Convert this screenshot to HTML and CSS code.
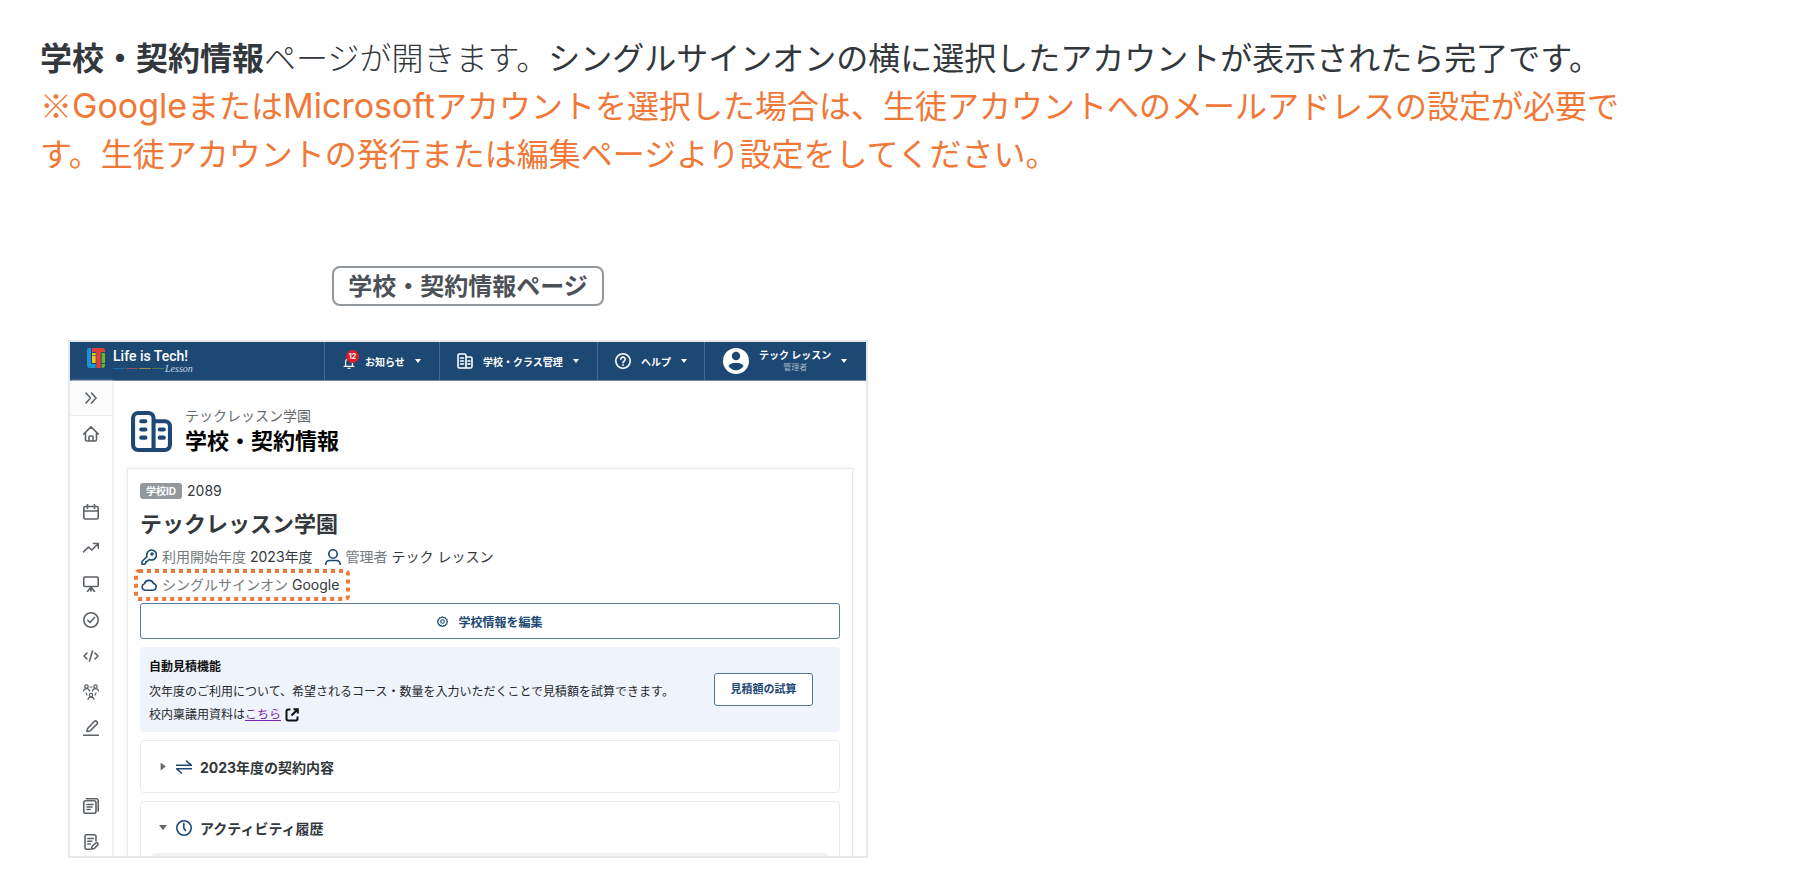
FILE: index.html
```html
<!DOCTYPE html>
<html lang="ja">
<head>
  <meta charset="UTF-8" />
  <meta name="viewport" content="width=device-width, initial-scale=1.0" />
  <title>学校・契約情報</title>
  <link rel="stylesheet" href="styles.css">
</head>
<body>
  <p class="guide"><strong>学校・契約情報</strong><span class="guide-light">ページが開きます。</span>シングルサインオンの横に選択したアカウントが表示されたら完了です。</p>
  <p class="guide guide-note">※<span class="latin">Google</span>または<span class="latin">Microsoft</span>アカウントを選択した場合は、生徒アカウントへのメールアドレスの設定が必要です。生徒アカウントの発行または編集ページより設定をしてください。</p>

  <figure class="shot">
    <figcaption class="shot-label">学校・契約情報ページ</figcaption>

    <div class="screen">
      <header class="topbar">
        <a class="brand" href="#" aria-label="Life is Tech! Lesson">
          <svg class="brand-mark" viewBox="0 0 18 20">
            <path d="M0 2a2 2 0 0 1 2-2h2v16h5v4H3a3 3 0 0 1-3-3z" fill="#1c94d2"/>
            <path d="M5 0h10a3 3 0 0 1 3 3v1h-4v16H9V4H5z" fill="#e04238"/>
            <path d="M5 5h4v10H5z" fill="#f6c416"/>
            <path d="M14.500 5H18v10h-3.500zM14.500 16H18v1a3 3 0 0 1-3 3h-.5z" fill="#6fb52c"/>
            <path d="M4.500 0v15.500H9M14 4.500h4M14 5v15M9 5v15M5 7.500h4M14 15.500h4" fill="none" stroke="#1c4873" stroke-width=".6"/>
          </svg>
          <span class="brand-text">
            <span class="brand-name">Life is Tech!</span>
            <span class="brand-sub">
              <i class="dash blue"></i><i class="dash red"></i><i class="dash yellow"></i><i class="dash green"></i>
              <em>Lesson</em>
            </span>
          </span>
        </a>
        <button class="top-item news">
          <span class="bell">
            <svg viewBox="0 0 16 16" class="ico-sm line"><path d="M3.500 12V7a4.500 4.500 0 0 1 9 0v5M1.500 12.500h13M6.500 15h3"/></svg>
            <span class="count">12</span>
          </span>
          <span>お知らせ</span><i class="caret"></i>
        </button>
        <button class="top-item school">
          <svg viewBox="0 0 16 16" class="ico line"><path d="M9 15H2.500A1.500 1.500 0 0 1 1 13.500v-11A1.500 1.500 0 0 1 2.500 1h5A1.500 1.500 0 0 1 9 2.500zM9 4h4.500A1.500 1.500 0 0 1 15 5.500v8a1.500 1.500 0 0 1-1.500 1.500H9M3.500 5h3M3.500 8h3M3.500 11h3M11 8h2M11 11h2"/></svg>
          <span>学校・クラス管理</span><i class="caret"></i>
        </button>
        <button class="top-item help">
          <svg viewBox="0 0 16 16" class="ico line"><circle cx="8" cy="8" r="7.200"/><path d="M5.800 6.300a2.200 2.200 0 1 1 3.300 1.900C8.300 8.700 8 9 8 9.800M8 11.800v.4"/></svg>
          <span>ヘルプ</span><i class="caret"></i>
        </button>
        <button class="top-item user">
          <svg viewBox="0 0 26 26" class="avatar"><circle cx="13" cy="13" r="13" fill="#fff"/><circle cx="13" cy="8" r="4.200" fill="#1c4873"/><path d="M5.500 18c1.200-2 4-3.200 7.500-3.200s6.300 1.200 7.500 3.200c-1.500 2.500-4.300 4.200-7.500 4.200S7 20.500 5.500 18z" fill="#1c4873"/></svg>
          <span class="user-name">テック レッスン<small>管理者</small></span><i class="caret"></i>
        </button>
      </header>

      <div class="body">
        <nav class="sidebar" aria-label="メニュー">
          <button class="side-toggle" aria-label="開く"><svg viewBox="0 0 16 16" class="ico line"><path d="M3 3l4.500 5L3 13M8.500 3L13 8l-4.500 5"/></svg></button>
          <button class="side-item" aria-label="ホーム"><svg viewBox="0 0 16 16" class="ico line"><path d="M.7 8L8 .9 15.300 8M2.500 6.500v7A1.500 1.500 0 0 0 4 15h8a1.500 1.500 0 0 0 1.500-1.500v-7M6 15v-4a1 1 0 0 1 1-1h2a1 1 0 0 1 1 1v4"/></svg></button>
          <div class="side-group">
            <button class="side-item" aria-label="カレンダー"><svg viewBox="0 0 16 16" class="ico line"><rect x=".8" y="2.500" width="14.400" height="12.500" rx="1.500"/><path d="M1 7h14M4.500 .5v4M11.500 .5v4"/></svg></button>
            <button class="side-item" aria-label="進捗"><svg viewBox="0 0 16 16" class="ico line"><path d="M.5 12l5-5 3.200 3L15 4M10.500 3.500h4.800V8"/></svg></button>
            <button class="side-item" aria-label="授業"><svg viewBox="0 0 16 16" class="ico line"><rect x=".8" y="1" width="14.400" height="9.500" rx="1"/><path d="M8 10.500V15M8 11l-3.500 4.500M8 11l3.500 4.500"/></svg></button>
            <button class="side-item" aria-label="課題"><svg viewBox="0 0 16 16" class="ico line"><circle cx="8" cy="8" r="7.200"/><path d="M4.800 8.300L7 10.500l4.500-5"/></svg></button>
            <button class="side-item" aria-label="コード"><svg viewBox="0 0 16 16" class="ico line"><path d="M4 5L1 8l3 3M12 5l3 3-3 3M9.500 3l-3 10"/></svg></button>
            <button class="side-item" aria-label="グループ"><svg viewBox="0 0 16 16" class="ico line thin"><circle cx="3.500" cy="2.500" r="1.700"/><path d="M.5 7c.3-3.200 5.700-3.200 6 0"/><circle cx="12.500" cy="2.500" r="1.700"/><path d="M9.500 7c.3-3.200 5.700-3.200 6 0"/><circle cx="8" cy="11" r="1.700"/><path d="M5 15.500c.3-3.200 5.700-3.200 6 0M7 3h2M3 9l1 2M13 9l-1 2"/></svg></button>
            <button class="side-item" aria-label="編集"><svg viewBox="0 0 16 16" class="ico line"><path d="M.5 15.300h15M4 11.500l.6-3L11.500 1.300a1.400 1.400 0 0 1 2 0l.6.6a1.400 1.400 0 0 1 0 2L7 11z"/></svg></button>
          </div>
          <div class="side-group">
            <button class="side-item" aria-label="教材"><svg viewBox="0 0 16 16" class="ico line"><rect x=".8" y="2.800" width="12.200" height="12.400" rx="2"/><path d="M3.500 .8h9.700a2 2 0 0 1 2 2V13M4 6.500h6M4 9h5M4 11.500h3"/></svg></button>
            <button class="side-item" aria-label="レポート"><svg viewBox="0 0 16 16" class="ico line"><path d="M7 15.200H3.500A1.500 1.500 0 0 1 2 13.700V2.300A1.500 1.500 0 0 1 3.500.8h8A1.500 1.500 0 0 1 13 2.300V7M4.800 4.500h5.500M4.800 7.300h4M4.800 10h2.500M8.500 15l.4-2.500 3.800-3.300a1.300 1.300 0 0 1 2 1.900L11.200 14.500z"/></svg></button>
          </div>
        </nav>

        <main class="main">
          <div class="page-head">
            <svg viewBox="0 0 40 40" class="page-icon"><path d="M22 38H7a5 5 0 0 1-5-5V7a5 5 0 0 1 5-5h10a5 5 0 0 1 5 5zM22 10h11a5 5 0 0 1 5 5v18a5 5 0 0 1-5 5H22M10 10h4M10 18h4M10 26h4M28 18h4M28 26h4"/></svg>
            <div>
              <p class="page-school">テックレッスン学園</p>
              <h1>学校・契約情報</h1>
            </div>
          </div>

          <section class="card">
            <p class="school-id"><span class="badge">学校ID</span>2089</p>
            <h2>テックレッスン学園</h2>
            <div class="facts">
              <span class="fact">
                <svg viewBox="0 0 16 16" class="ico line navy"><path d="M10 1a5 5 0 1 1-1.700 9.500L6 12.500H4.800V14L3.500 15.200H1V12.500l5-5A5 5 0 0 1 10 1z"/><circle cx="11" cy="5" r="1"/></svg>
                <span class="fact-label">利用開始年度</span> 2023年度
              </span>
              <span class="fact">
                <svg viewBox="0 0 16 16" class="ico line navy"><circle cx="8" cy="5" r="4.200"/><path d="M.8 15.500c0-2.600 1.800-4 4-4h6.400c2.200 0 4 1.400 4 4"/></svg>
                <span class="fact-label">管理者</span> テック レッスン
              </span>
            </div>
            <div class="facts sso">
              <span class="fact">
                <svg viewBox="0 0 16 16" class="ico line navy"><path d="M4 13.200A3.300 3.300 0 0 1 3.400 6.800 4.800 4.800 0 0 1 12.500 6.500 3.400 3.400 0 0 1 12 13.200z"/></svg>
                <span class="fact-label">シングルサインオン</span> Google
              </span>
              <svg class="marker" viewBox="0 0 216 32"><rect x="2" y="2" width="212" height="28" rx="3"/></svg>
            </div>

            <button class="edit">
              <svg viewBox="0 0 16 16" class="gear line"><path d="M8 1l1.600 1.500 2.200-.4.700 2 2 .7-.4 2.100L15.500 8l-1.400 1.600.4 2.100-2 .7-.7 2-2.200-.4L8 15.500 6.400 14l-2.200.4-.7-2-2-.7.4-2.100L.5 8l1.400-1.100-.4-2.100 2-.7.7-2 2.200.4z"/><circle cx="8" cy="8" r="2.600"/></svg>
              学校情報を編集
            </button>

            <div class="estimate">
              <div class="estimate-text">
                <h3>自動見積機能</h3>
                <p>次年度のご利用について、希望されるコース・数量を入力いただくことで見積額を試算できます。</p>
                <p>校内稟議用資料は<a href="#">こちら</a><svg viewBox="0 0 14 14" class="ext"><path d="M5.500 1.500H3A1.500 1.500 0 0 0 1.500 3v8A1.500 1.500 0 0 0 3 12.500h8a1.500 1.500 0 0 0 1.500-1.500V8.500M8.500 1.200h4.300v4.300M12.500 1.500L6.500 7.500"/></svg></p>
              </div>
              <button class="try">見積額の試算</button>
            </div>

            <div class="fold">
              <button class="fold-head" aria-expanded="false">
                <i class="tri"></i>
                <svg viewBox="0 0 16 16" class="ico line navy"><path d="M.5 6.200h14.800L10.500 2M15.500 9.800H.7l4.800 4.200"/></svg>
                2023年度の契約内容
              </button>
            </div>

            <div class="fold">
              <button class="fold-head" aria-expanded="true">
                <i class="tri open"></i>
                <svg viewBox="0 0 16 16" class="ico line navy"><circle cx="8" cy="8" r="7.200"/><path d="M7.800 3.500V8l1.700 2.500"/></svg>
                アクティビティ履歴
              </button>
              <div class="fold-body"></div>
            </div>
          </section>
        </main>
      </div>
    </div>
  </figure>
</body>
</html>
```

FILE: styles.css
```css
* {
  box-sizing: border-box;
}

body {
  margin: 0;
  padding: 32px 40px 24px;
  background: #fff;
  color: #33383d;
  font-family: Inter, "Noto Sans CJK JP", sans-serif;
}

p, h1, h2, h3 {
  margin: 0;
}

button {
  padding: 0;
  border: none;
  background: none;
  color: inherit;
  font: inherit;
  cursor: pointer;
}

.guide {
  max-width: 1600px;
  font-family: "Noto Sans CJK JP", sans-serif;
  font-size: 32px;
  line-height: 48px;
}

.guide-light {
  font-weight: 300;
}

.guide-note {
  color: #f07838;
}

.latin {
  font-family: Inter, sans-serif;
  font-size: 34px;
  line-height: 1;
}

.shot {
  max-width: 800px;
  margin: 90px 0 0 28px;
  display: flex;
  flex-direction: column;
  align-items: center;
  gap: 34px;
}

.shot-label {
  padding: 2px 14px 0;
  border: 2px solid #92979c;
  border-radius: 8px;
  color: #4b5157;
  font-size: 24px;
  font-weight: 700;
  line-height: 34px;
}

/* app window, cut off at the bottom */
.screen {
  width: 100%;
  max-height: 518px;
  overflow: hidden;
  border: 2px solid #e6e7e8;
  background: #fff;
}

.ico {
  width: 16px;
  height: 16px;
  flex: none;
}

.line {
  fill: none;
  stroke: currentColor;
  stroke-width: 1.6;
  stroke-linecap: round;
  stroke-linejoin: round;
}

.thin {
  stroke-width: 1.2;
}

.navy {
  color: #1c4873;
}

/* top bar */
.topbar {
  display: flex;
  height: 39px;
  background: #1c4873;
  border-bottom: 1px solid #6c89a6;
  color: #fff;
  font-size: 10px;
  font-weight: 700;
}

.brand {
  flex: 1;
  display: flex;
  align-items: flex-start;
  gap: 8px;
  padding: 6px 0 0 17px;
  color: #fff;
  text-decoration: none;
}

.brand-mark {
  width: 18px;
  height: 20px;
}

.brand-text {
  display: flex;
  flex-direction: column;
}

.brand-name {
  font-family: Roboto, sans-serif;
  font-size: 14px;
  font-weight: 500;
  line-height: 16px;
}

.brand-sub {
  display: flex;
  align-items: center;
  gap: 1px;
  line-height: 9px;
}

.brand-sub em {
  color: #c9d6e2;
  font-family: "Liberation Serif", serif;
  font-size: 10px;
  font-weight: 400;
}

.dash {
  width: 12px;
  height: 1px;
}

.blue { background: #1c6fa5; }
.red { background: #94505f; }
.yellow { background: #8f8b4c; }
.green { background: #4a8050; }

.top-item {
  display: flex;
  align-items: center;
  gap: 10px;
  padding-left: 17px;
  border-left: 1px solid #466a8e;
}

.news { width: 115px; }
.school { width: 158px; }
.help { width: 107px; }

.user {
  width: 162px;
  padding-left: 18px;
}

.caret {
  border: 3px solid transparent;
  border-top: 4px solid #fff;
  border-bottom: 0;
}

.bell {
  position: relative;
  display: flex;
  padding: 3px 0 0 1px;
}

.ico-sm {
  width: 12px;
  height: 12px;
}

.count {
  position: absolute;
  top: -4px;
  left: 4px;
  width: 13px;
  height: 13px;
  border-radius: 50%;
  background: #dc1e2c;
  font-size: 7px;
  line-height: 13px;
  text-align: center;
}

.avatar {
  width: 26px;
  height: 26px;
}

.user-name {
  display: flex;
  flex-direction: column;
  align-items: center;
  line-height: 13px;
}

.user-name small {
  color: #a4b6c7;
  font-size: 8px;
  font-weight: 400;
  line-height: 11px;
}

/* side menu */
.body {
  display: flex;
}

.sidebar {
  flex: none;
  width: 42px;
  display: flex;
  flex-direction: column;
  box-shadow: 1px 0 3px #e6e6e6;
  color: #5c6268;
}

.side-toggle {
  height: 35px;
  display: flex;
  align-items: center;
  justify-content: center;
  border-bottom: 1px solid #eee;
  background: #fbfbfb;
}

.side-item {
  height: 36px;
  display: flex;
  align-items: center;
  justify-content: center;
}

.side-group {
  display: flex;
  flex-direction: column;
  margin-top: 42px;
}

/* content */
.main {
  flex: 1;
  padding: 25px 13px 0 15px;
}

.page-head {
  display: flex;
  align-items: center;
  gap: 13px;
  padding-left: 4px;
}

.page-icon {
  width: 41px;
  height: 41px;
  fill: none;
  stroke: #1c4873;
  stroke-width: 4;
  stroke-linecap: round;
  stroke-linejoin: round;
}

.page-school {
  color: #666b70;
  font-size: 14px;
  line-height: 20px;
}

h1 {
  color: #000;
  font-size: 22px;
  font-weight: 700;
  line-height: 30px;
}

.card {
  margin-top: 12px;
  padding: 14px 12px 24px;
  border: 1px solid #ebebeb;
  box-shadow: 0 0 4px #efefef;
}

.school-id {
  display: flex;
  align-items: center;
  gap: 5px;
  font-size: 14px;
  line-height: 16px;
}

.badge {
  padding: 0 6px;
  border-radius: 3px;
  background: #92989b;
  color: #fff;
  font-size: 10px;
  font-weight: 700;
}

h2 {
  margin-top: 9px;
  font-size: 22px;
  font-weight: 700;
  line-height: 32px;
}

.facts {
  display: flex;
  gap: 12px;
  padding-left: 1px;
  margin-top: 3px;
  font-size: 14px;
  line-height: 28px;
}

.fact {
  display: flex;
  align-items: center;
  gap: 4px;
}

.fact-label {
  padding-left: 1px;
  color: #74797e;
}

.sso {
  position: relative;
  margin-top: 0;
}

.marker {
  position: absolute;
  top: -2px;
  left: -6px;
  width: 216px;
  height: 32px;
  fill: none;
  stroke: #f07838;
  stroke-width: 4;
  stroke-dasharray: 4 4;
}

.edit {
  width: 100%;
  height: 36px;
  margin-top: 4px;
  display: flex;
  align-items: center;
  justify-content: center;
  gap: 10px;
  border: 1px solid #5d7d9d;
  border-radius: 3px;
  color: #1c4873;
  font-size: 12px;
  font-weight: 700;
}

.gear {
  width: 11px;
  height: 11px;
}

.estimate {
  margin-top: 8px;
  padding: 6px 27px 6px 9px;
  display: flex;
  align-items: center;
  justify-content: space-between;
  border-radius: 4px;
  background: #eff3fb;
  color: #25292d;
  font-size: 12px;
  line-height: 23px;
}

.estimate h3 {
  color: #111;
  font-size: 12px;
  font-weight: 700;
  line-height: 27px;
}

.estimate a {
  color: #7b27b5;
}

.ext {
  width: 14px;
  height: 14px;
  margin-left: 4px;
  vertical-align: -3px;
  fill: none;
  stroke: #111;
  stroke-width: 2;
}

.try {
  width: 99px;
  height: 33px;
  border: 1px solid #4f759c;
  border-radius: 3px;
  background: #fff;
  color: #1c4873;
  font-size: 11px;
  font-weight: 700;
}

.fold {
  margin-top: 8px;
  border: 1px solid #ebecee;
  border-radius: 4px;
}

.fold-head {
  width: 100%;
  height: 51px;
  padding-left: 18px;
  display: flex;
  align-items: center;
  gap: 8px;
  font-size: 14px;
  font-weight: 700;
}

.tri {
  width: 8px;
  height: 8px;
  margin-right: 1px;
  background: #666b70;
  clip-path: polygon(20% 0, 85% 50%, 20% 100%);
}

.tri.open {
  clip-path: polygon(0 20%, 100% 20%, 50% 85%);
}

.fold-body {
  height: 40px;
  margin: 0 11px;
  border-radius: 4px 4px 0 0;
  background: #f1f1f2;
}
```
